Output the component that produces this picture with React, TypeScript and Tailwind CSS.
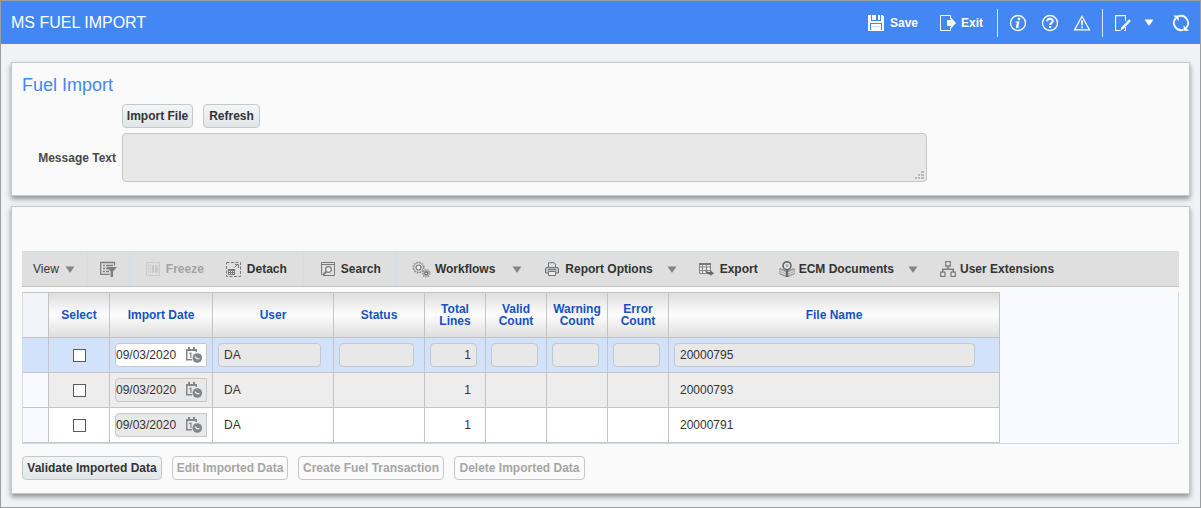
import React, { useState } from "react";

type IconProps = { className?: string };

const SaveIcon = () => (
  <svg width="16" height="16" viewBox="0 0 16 16" className="shrink-0" aria-hidden="true">
    <path fill="#fff" d="M0 0h3v6h10V0h1.500L16 1.500V16H0Z" />
    <path fill="#fff" d="M4 0h4v5H4zM10 0h2v5h-2z" />
    <path fill="#4387f4" d="M2 8h12v1H2zM2 8h1v7H2zM13 8h1v7h-1z" />
    <path fill="#4387f4" d="M4 11h8v1H4z" opacity="0.3" />
  </svg>
);

const ExitIcon = () => (
  <svg width="16" height="16" viewBox="0 0 16 16" className="shrink-0" aria-hidden="true">
    <path fill="none" stroke="#fff" d="M10.500 4V.5H.5v15h10V12" />
    <path fill="#fff" d="M7 5h4V2.500L16 8l-5 5.500V11H7z" />
  </svg>
);

const InfoIcon = () => (
  <svg width="18" height="18" viewBox="0 0 18 18" aria-hidden="true">
    <circle cx="9" cy="9" r="7.500" fill="none" stroke="#fff" strokeWidth="1.300" />
    <circle cx="10" cy="4.900" r="1.400" fill="#fff" />
    <path fill="#fff" d="M6.600 7.400h4l-1.300 5c-.1.500.4.500 1.300 0l-.3.900c-1.800 1.200-3.800.9-3.300-.9l1-3.900H6.400z" />
  </svg>
);

const HelpIcon = () => (
  <svg width="18" height="18" viewBox="0 0 18 18" aria-hidden="true">
    <circle cx="9" cy="9" r="7.500" fill="none" stroke="#fff" strokeWidth="1.300" />
    <path fill="none" stroke="#fff" strokeWidth="2" d="M6.200 7.200C6.200 4 11.800 4 11.800 7c0 1.800-2.700 1.900-2.700 4" />
    <path fill="#fff" d="M8 12h2.200v2H8z" />
  </svg>
);

const WarnIcon = () => (
  <svg width="18" height="18" viewBox="0 0 18 18" aria-hidden="true">
    <path fill="none" stroke="#fff" strokeWidth="1.300" d="M9 2.300 16.400 15.900H1.600z" />
    <path fill="#fff" d="M8 6.500h2l-.4 5H8.400zM8.100 12.500h1.800v1.700H8.100z" />
  </svg>
);

const EditIcon = () => (
  <svg width="16" height="16" viewBox="0 0 16 16" aria-hidden="true">
    <path fill="none" stroke="#fff" strokeWidth="1.100" d="M10.500 6V.6H.6v14.900h4.900M10.500 12v3.500H9" />
    <path fill="#fff" d="m14.200 4.300 1.600 1.700-7.300 7.700-2.900 1.800.9-3.200z" />
  </svg>
);

const ReloadIcon = () => (
  <svg width="18" height="18" viewBox="0 0 18 18" aria-hidden="true">
    <path fill="none" stroke="#fff" strokeWidth="1.800" d="M6.700 2.200A7.200 7.200 0 0 1 14.200 13.900M11.300 15.800A7.200 7.200 0 0 1 3.800 4.100" />
    <path fill="#fff" d="M1.300 1.600h5.400v5.300zM11.600 11.400v5.300h5.400z" />
  </svg>
);

const Caret = ({ className = "text-[#808689]" }: IconProps) => (
  <svg width="10" height="7" viewBox="0 0 10 7" className={`shrink-0 ${className}`} aria-hidden="true">
    <path fill="currentColor" d="M.5.500h9L5.300 6.500h-.6z" />
  </svg>
);

const FilterIcon = () => (
  <svg width="17" height="16" viewBox="0 0 17 16" aria-hidden="true">
    <path fill="none" stroke="#7c7f82" strokeWidth="1.300" d="M14.500 4.500v-3H.7v11.800h8.800" />
    <path stroke="#7c7f82" strokeWidth="1.300" d="M3 4.500h2M6 4.500h7M3 7.500h2M6 7.500h2M3 10.500h2M6 10.500h3" />
    <path fill="#7c7f82" d="M6.500 6H17l-4 4.500V16h-2.400v-5.500z" />
  </svg>
);

const FreezeIcon = () => (
  <svg width="14" height="14" viewBox="0 0 14 14" className="shrink-0" aria-hidden="true">
    <path fill="none" stroke="#cbcbcb" d="M.5.500h13v13H.5z" />
    <path fill="none" stroke="#c6c6c6" strokeDasharray="2 1" d="M2.500 2.500v9M4.500 2.500v9" />
    <path fill="none" stroke="#c6c6c6" d="M6.500 3.500h1v7h-1zM9.500 3.500h1v7h-1zM12 3v8" />
  </svg>
);

const DetachIcon = () => (
  <svg width="15" height="15" viewBox="0 0 15 15" className="shrink-0" aria-hidden="true">
    <path fill="none" stroke="#77797b" strokeDasharray="3 1.500" d="M.5.500h14v14H.5z" />
    <path fill="#77797b" d="M2 7h7v6H2z" />
    <path fill="#eee" d="M3 9h1v1H3zM5 9h1v1H5zM7 9h1v1H7zM3 11h1v1H3zM5 11h1v1H5zM7 11h1v1H7z" />
    <path fill="none" stroke="#77797b" d="M8.500 5.500l3.500-3.500M9 2.500h3.500V6" />
  </svg>
);

const SearchIcon = () => (
  <svg width="14" height="14" viewBox="0 0 14 14" className="shrink-0" aria-hidden="true">
    <path fill="none" stroke="#77797b" d="M2 13.500h11.500V.5H.5V13M1 2.500h12" />
    <circle cx="7.500" cy="7.500" r="2.800" fill="#eee" stroke="#77797b" strokeWidth="1.200" />
    <path stroke="#77797b" strokeWidth="1.900" d="M5.300 9.700 2 13" />
  </svg>
);

const GearsIcon = () => (
  <svg width="19" height="17" viewBox="0 0 19 17" className="shrink-0" aria-hidden="true">
    <circle cx="6.500" cy="6.500" r="5.300" fill="none" stroke="#8c8f92" strokeWidth="1.500" strokeDasharray="1.600 1.170" />
    <circle cx="6.500" cy="6.500" r="4.600" fill="#e8e8e8" stroke="#8c8f92" strokeWidth=".7" />
    <circle cx="6.500" cy="6.500" r="2.500" fill="#eee" stroke="#707275" strokeWidth="1.200" />
    <circle cx="14.200" cy="12.300" r="3.600" fill="#dedede" stroke="#8c8f92" strokeWidth="1.300" strokeDasharray="1.500 1" />
    <circle cx="14.200" cy="12.300" r="2.900" fill="#c6c6c6" stroke="#8c8f92" strokeWidth=".6" />
    <circle cx="14.200" cy="12.300" r="1.400" fill="#eee" stroke="#606265" strokeWidth="1.100" />
  </svg>
);

const PrinterIcon = () => (
  <svg width="14" height="14" viewBox="0 0 14 14" className="shrink-0" aria-hidden="true">
    <path fill="none" stroke="#6f7275" d="M3.500 5V.7h5.500l1.500 1.500V5" />
    <path fill="#c2c2c2" stroke="#6f7275" d="M2 5.500h10q1.500 0 1.500 1.500v4h-13V7Q.5 5.500 2 5.500z" />
    <path stroke="#6f7275" d="M3 7.500h8" />
    <path fill="#eee" stroke="#6f7275" d="M3.500 9.500h7v4h-7z" />
  </svg>
);

const ExportIcon = () => (
  <svg width="15" height="14" viewBox="0 0 15 14" className="shrink-0" aria-hidden="true">
    <path fill="#e8e8e8" stroke="#85878a" d="M.5 1.500h11v10H.5zM.5 5h11M.5 8.500h11M3.500 2v9.500M7.500 2v9.500" />
    <path fill="#77797b" d="M0 1h12v2H0z" />
    <path fill="#66696c" d="M6 7.500c1 2 3 2.600 5 2.400V8l4 3.300-3.500 2.700v-1.500C8.500 12.500 6.500 11 6 7.500z" />
  </svg>
);

const EcmIcon = () => (
  <svg width="16" height="16" viewBox="0 0 16 16" className="shrink-0" aria-hidden="true">
    <path fill="#aaa" stroke="#888" strokeWidth=".8" d="M.8 7.500 7 9.500v6L.8 13zM15.200 7.500 9 9.500v6l6.200-2.500z" />
    <path stroke="#e9e9e9" strokeWidth=".9" d="M.8 9.500 7 12M.8 11.500 7 14M15.200 9.500 9 12M15.200 11.500 9 14" />
    <circle cx="8" cy="4.700" r="3.900" fill="#eee" stroke="#66696c" strokeWidth="1.700" />
    <circle cx="8" cy="4.700" r="1.600" fill="#a9a9a9" />
    <path stroke="#66696c" strokeWidth="2.200" d="M8 8.500V16" />
  </svg>
);

const TreeIcon = () => (
  <svg width="16" height="16" viewBox="0 0 16 16" className="shrink-0" aria-hidden="true">
    <path fill="none" stroke="#7c7f82" strokeWidth="1.600" d="M8 5v3M2.800 11V8.300h10.400V11" />
    <path fill="#eaeaea" stroke="#7c7f82" strokeWidth="1.300" d="M5.700.7h4.600V5H5.700zM.7 11.200H5v4.100H.7zM11 11.200h4.300v4.100H11z" />
  </svg>
);

const DateTimeIcon = () => (
  <svg width="17" height="16" viewBox="0 0 17 16" aria-hidden="true">
    <path fill="#80868a" d="M0 2h2V0h2v2h3V0h2v2h2v3H9.500V4h-8v8H6v1.500H0z" />
    <path fill="#80868a" d="M3 6.500 4.500 5.500h1V11H4.300V7H3z" />
    <circle cx="11.300" cy="11" r="4.800" fill="#80868a" />
    <path fill="none" stroke="#fff" strokeWidth="1.100" d="M8.800 9.700 11 11.700h2.500" />
  </svg>
);

const HeaderRule = () => <span className="h-7 w-px bg-white/80" />;
const ToolRule = () => <span className="w-px self-stretch bg-[#d2dde8]" />;

const toolItem = "flex items-center font-bold whitespace-nowrap";
const pushButton =
  "h-6 rounded-[4px] border border-[#c4c8cb] text-xs font-bold whitespace-nowrap text-[#333] bg-linear-to-b from-[#f3f5f6] to-[#e1e6ea] disabled:bg-none disabled:text-[#a6a6a6]";
const field =
  "block h-6 rounded-[4px] border border-[#c4c8cb] bg-[#e8e8e8] px-[5px] text-xs text-[#333] outline-none";
const panel =
  "border border-[#c4c6c7] bg-[#fafafa] px-[10px] shadow-[0_3px_5px_rgba(0,0,0,0.4)]";
const cell = "border-r border-b border-[#c4c4c4] px-[5px]";

const columns = [
  { label: "Select", width: "w-[61px]" },
  { label: "Import Date", width: "w-[103px]" },
  { label: "User", width: "w-[121px]" },
  { label: "Status", width: "w-[91px]" },
  { label: "Total Lines", width: "w-[61px]" },
  { label: "Valid Count", width: "w-[61px]" },
  { label: "Warning Count", width: "w-[61px]" },
  { label: "Error Count", width: "w-[61px]" },
  { label: "File Name", width: "w-[331px]" },
];

const rows = [
  { date: "09/03/2020", user: "DA", status: "", total: "1", valid: "", warning: "", error: "", file: "20000795" },
  { date: "09/03/2020", user: "DA", status: "", total: "1", valid: "", warning: "", error: "", file: "20000793" },
  { date: "09/03/2020", user: "DA", status: "", total: "1", valid: "", warning: "", error: "", file: "20000791" },
];

function ValueCell({ label, value, width, current, right }: {
  label: string; value: string; width: string; current: boolean; right?: boolean;
}) {
  const align = right ? "text-right" : "";
  return (
    <td className={`${cell} ${align}`}>
      {current ? (
        <input aria-label={label} readOnly value={value} className={`${field} ${width} ${align}`} />
      ) : (
        <span className={right ? "block pr-[9px]" : "block pl-[6px]"}>{value}</span>
      )}
    </td>
  );
}

export default function App() {
  const [checked, setChecked] = useState<boolean[]>([false, false, false]);

  return (
    <div className="flex min-h-screen flex-col border border-[#9c9da0] bg-[#f0f2f5] font-['Liberation_Sans',Arial,sans-serif] text-xs text-[#333]">
      <header className="flex h-[43px] items-center bg-[#4387f4] px-[10px] text-white">
        <h1 className="mr-auto text-base">MS FUEL IMPORT</h1>
        <button className="flex items-center gap-[6px] font-bold"><SaveIcon />Save</button>
        <button className="ml-[22px] flex items-center gap-[5px] font-bold"><ExitIcon />Exit</button>
        <div className="ml-[14px] flex items-center gap-[11px]">
          <HeaderRule />
          <div className="flex gap-[14px]">
            <button aria-label="Information"><InfoIcon /></button>
            <button aria-label="Help"><HelpIcon /></button>
            <button aria-label="Warnings"><WarnIcon /></button>
          </div>
          <HeaderRule />
        </div>
        <button aria-label="Edit" className="ml-[12px]"><EditIcon /></button>
        <button aria-label="Edit options" className="ml-[13px]"><Caret className="text-white" /></button>
        <button aria-label="Reload" className="ml-[18px]"><ReloadIcon /></button>
      </header>

      <main className="flex flex-col gap-[10px] px-[10px] pt-[18px] pb-[13px]">
        <section className={`${panel} pt-[10px] pb-[13px]`}>
          <h2 className="text-lg leading-6 text-[#4387f4]">Fuel Import</h2>
          <div className="mt-[7px] flex gap-[10px] pl-[100px]">
            <button className={`${pushButton} w-[71px]`}>Import File</button>
            <button className={`${pushButton} w-[57px]`}>Refresh</button>
          </div>
          <div className="mt-[5px] flex items-center">
            <label htmlFor="message" className="w-[100px] shrink-0 pr-[6px] text-right font-bold text-[#4a4a4a]">Message Text</label>
            <div className="relative w-full max-w-[805px]">
              <textarea id="message" readOnly className="block h-[49px] w-full resize-none rounded-[4px] border border-[#c4c6c7] bg-[#e8e8e8] p-1 outline-none" />
              <svg width="9" height="9" viewBox="0 0 9 9" className="pointer-events-none absolute right-[3px] bottom-[2px]" aria-hidden="true">
                <path fill="#b9b9b9" d="M6 0h3v2H6zM3 3h2v2H3zM6 3h3v2H6zM0 6h2v2H0zM3 6h2v2H3zM6 6h3v2H6z" />
              </svg>
            </div>
          </div>
        </section>

        <section className={`${panel} pt-[44px] pb-[13px]`}>
          <div className="flex h-9 items-center border-t border-b border-t-[#d2dde8] border-b-[#c4c4c4] bg-[#dfdfdf] pl-[11px]">
            <button className="mr-[12px] flex items-center gap-[6px]">View<Caret /></button>
            <ToolRule />
            <button aria-label="Query by example" className="mx-[12px]"><FilterIcon /></button>
            <ToolRule />
            <button disabled className={`${toolItem} mr-[22px] ml-[16px] gap-[6px] text-[#a3a3a3]`}><FreezeIcon />Freeze</button>
            <button className={`${toolItem} mr-[16px] gap-[6px]`}><DetachIcon />Detach</button>
            <ToolRule />
            <button className={`${toolItem} mr-[15px] ml-[17px] gap-[6px]`}><SearchIcon />Search</button>
            <ToolRule />
            <button className={`${toolItem} mr-[17px] ml-[15px] gap-[4px]`}><GearsIcon />Workflows</button>
            <button aria-label="Workflows menu" className="mr-[23px]"><Caret /></button>
            <button className={`${toolItem} mr-[14px] gap-[6px]`}><PrinterIcon />Report Options</button>
            <button aria-label="Report Options menu" className="mr-[22px]"><Caret /></button>
            <button className={`${toolItem} mr-[21px] gap-[6px]`}><ExportIcon />Export</button>
            <button className={`${toolItem} mr-[14px] gap-[4px]`}><EcmIcon />ECM Documents</button>
            <button aria-label="ECM Documents menu" className="mr-[22px]"><Caret /></button>
            <button className={`${toolItem} gap-[4px]`}><TreeIcon />User Extensions</button>
          </div>

          <div className="mt-[5px] border-r border-b border-l border-[#d3dce6] bg-[#f8faff]">
            <table className="w-[977px] table-fixed border-separate border-spacing-0">
              <thead>
                <tr className="h-[46px]">
                  <td className="w-[26px] border-t border-r border-b border-[#c4c4c4] bg-[#f1f3f9]" />
                  {columns.map((c) => (
                    <th key={c.label} scope="col" className={`${c.width} border-t border-r border-b border-[#c4c4c4] bg-linear-to-b from-[#dedede] via-[#fdfdfd] to-[#dedede] px-[3px] leading-3 font-bold text-[#1452c4]`}>
                      {c.label}
                    </th>
                  ))}
                </tr>
              </thead>
              <tbody>
                {rows.map((r, i) => {
                  const current = i === 0;
                  return (
                    <tr key={r.file} className={`h-[35px] ${current ? "bg-[#d3e2fb]" : i === 1 ? "bg-[#ededed]" : "bg-white"}`}>
                      <td className={`border-r border-b border-[#c4c4c4] ${current ? "" : "bg-[#f8faff]"}`} />
                      <td className={cell}>
                        <input
                          type="checkbox"
                          aria-label={`Select ${r.file}`}
                          checked={checked[i]}
                          onChange={() => setChecked(checked.map((v, j) => (j === i ? !v : v)))}
                          className="mx-auto block size-[13px] appearance-none border border-[#5a5a5a] bg-white checked:bg-[#1452c4]"
                        />
                      </td>
                      <td className={cell}>
                        <div className={`flex h-6 w-[92px] items-center rounded-l-[4px] border border-[#c4c8cb] ${current ? "bg-white" : "bg-[#e8e8e8]"}`}>
                          <input aria-label="Import Date" readOnly value={r.date} className="w-[70px] bg-transparent outline-none" />
                          <button aria-label="Select date and time"><DateTimeIcon /></button>
                        </div>
                      </td>
                      <ValueCell label="User" value={r.user} width="w-[103px]" current={current} />
                      <ValueCell label="Status" value={r.status} width="w-[75px]" current={current} />
                      <ValueCell label="Total Lines" value={r.total} width="w-[47px]" current={current} right />
                      <ValueCell label="Valid Count" value={r.valid} width="w-[47px]" current={current} right />
                      <ValueCell label="Warning Count" value={r.warning} width="w-[47px]" current={current} right />
                      <ValueCell label="Error Count" value={r.error} width="w-[47px]" current={current} right />
                      <ValueCell label="File Name" value={r.file} width="w-[301px]" current={current} />
                    </tr>
                  );
                })}
              </tbody>
            </table>
          </div>

          <div className="mt-[12px] flex gap-[10px]">
            <button className={`${pushButton} w-[140px]`}>Validate Imported Data</button>
            <button disabled className={`${pushButton} w-[116px]`}>Edit Imported Data</button>
            <button disabled className={`${pushButton} w-[146px]`}>Create Fuel Transaction</button>
            <button disabled className={`${pushButton} w-[131px]`}>Delete Imported Data</button>
          </div>
        </section>
      </main>
    </div>
  );
}
